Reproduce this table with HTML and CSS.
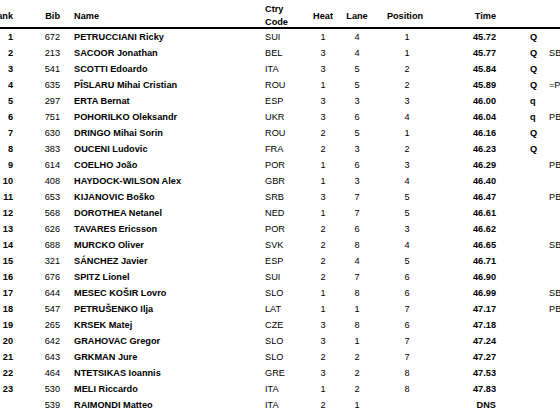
FILE: index.html
```html
<!DOCTYPE html>
<html lang="en">
<head>
<meta charset="utf-8">
<title>Results</title>
<link rel="stylesheet" href="styles.css">
</head>
<body>
<div class="results">
  <div class="row head">
    <div class="c rank">Rank</div>
    <div class="c bib">Bib</div>
    <div class="c name">Name</div>
    <div class="c ctry">Ctry<br>Code</div>
    <div class="c heat">Heat</div>
    <div class="c lane">Lane</div>
    <div class="c pos">Position</div>
    <div class="c time">Time</div>
    <div class="c q"></div>
    <div class="c rem"></div>
  </div>
  <div class="row"><div class="c rank">1</div><div class="c bib">672</div><div class="c name">PETRUCCIANI Ricky</div><div class="c ctry">SUI</div><div class="c heat">1</div><div class="c lane">4</div><div class="c pos">1</div><div class="c time">45.72</div><div class="c q">Q</div><div class="c rem"></div></div>
  <div class="row"><div class="c rank">2</div><div class="c bib">213</div><div class="c name">SACOOR Jonathan</div><div class="c ctry">BEL</div><div class="c heat">3</div><div class="c lane">4</div><div class="c pos">1</div><div class="c time">45.77</div><div class="c q">Q</div><div class="c rem">SB</div></div>
  <div class="row"><div class="c rank">3</div><div class="c bib">541</div><div class="c name">SCOTTI Edoardo</div><div class="c ctry">ITA</div><div class="c heat">3</div><div class="c lane">5</div><div class="c pos">2</div><div class="c time">45.84</div><div class="c q">Q</div><div class="c rem"></div></div>
  <div class="row"><div class="c rank">4</div><div class="c bib">635</div><div class="c name">PÎSLARU Mihai Cristian</div><div class="c ctry">ROU</div><div class="c heat">1</div><div class="c lane">5</div><div class="c pos">2</div><div class="c time">45.89</div><div class="c q">Q</div><div class="c rem">=PB</div></div>
  <div class="row"><div class="c rank">5</div><div class="c bib">297</div><div class="c name">ERTA Bernat</div><div class="c ctry">ESP</div><div class="c heat">3</div><div class="c lane">3</div><div class="c pos">3</div><div class="c time">46.00</div><div class="c q">q</div><div class="c rem"></div></div>
  <div class="row"><div class="c rank">6</div><div class="c bib">751</div><div class="c name">POHORILKO Oleksandr</div><div class="c ctry">UKR</div><div class="c heat">3</div><div class="c lane">6</div><div class="c pos">4</div><div class="c time">46.04</div><div class="c q">q</div><div class="c rem">PB</div></div>
  <div class="row"><div class="c rank">7</div><div class="c bib">630</div><div class="c name">DRINGO Mihai Sorin</div><div class="c ctry">ROU</div><div class="c heat">2</div><div class="c lane">5</div><div class="c pos">1</div><div class="c time">46.16</div><div class="c q">Q</div><div class="c rem"></div></div>
  <div class="row"><div class="c rank">8</div><div class="c bib">383</div><div class="c name">OUCENI Ludovic</div><div class="c ctry">FRA</div><div class="c heat">2</div><div class="c lane">3</div><div class="c pos">2</div><div class="c time">46.23</div><div class="c q">Q</div><div class="c rem"></div></div>
  <div class="row"><div class="c rank">9</div><div class="c bib">614</div><div class="c name">COELHO João</div><div class="c ctry">POR</div><div class="c heat">1</div><div class="c lane">6</div><div class="c pos">3</div><div class="c time">46.29</div><div class="c q"></div><div class="c rem">PB</div></div>
  <div class="row"><div class="c rank">10</div><div class="c bib">408</div><div class="c name">HAYDOCK-WILSON Alex</div><div class="c ctry">GBR</div><div class="c heat">1</div><div class="c lane">3</div><div class="c pos">4</div><div class="c time">46.40</div><div class="c q"></div><div class="c rem"></div></div>
  <div class="row"><div class="c rank">11</div><div class="c bib">653</div><div class="c name">KIJANOVIC Boško</div><div class="c ctry">SRB</div><div class="c heat">3</div><div class="c lane">7</div><div class="c pos">5</div><div class="c time">46.47</div><div class="c q"></div><div class="c rem">PB</div></div>
  <div class="row"><div class="c rank">12</div><div class="c bib">568</div><div class="c name">DOROTHEA Netanel</div><div class="c ctry">NED</div><div class="c heat">1</div><div class="c lane">7</div><div class="c pos">5</div><div class="c time">46.61</div><div class="c q"></div><div class="c rem"></div></div>
  <div class="row"><div class="c rank">13</div><div class="c bib">626</div><div class="c name">TAVARES Ericsson</div><div class="c ctry">POR</div><div class="c heat">2</div><div class="c lane">6</div><div class="c pos">3</div><div class="c time">46.62</div><div class="c q"></div><div class="c rem"></div></div>
  <div class="row"><div class="c rank">14</div><div class="c bib">688</div><div class="c name">MURCKO Oliver</div><div class="c ctry">SVK</div><div class="c heat">2</div><div class="c lane">8</div><div class="c pos">4</div><div class="c time">46.65</div><div class="c q"></div><div class="c rem">SB</div></div>
  <div class="row"><div class="c rank">15</div><div class="c bib">321</div><div class="c name">SÁNCHEZ Javier</div><div class="c ctry">ESP</div><div class="c heat">2</div><div class="c lane">4</div><div class="c pos">5</div><div class="c time">46.71</div><div class="c q"></div><div class="c rem"></div></div>
  <div class="row"><div class="c rank">16</div><div class="c bib">676</div><div class="c name">SPITZ Lionel</div><div class="c ctry">SUI</div><div class="c heat">2</div><div class="c lane">7</div><div class="c pos">6</div><div class="c time">46.90</div><div class="c q"></div><div class="c rem"></div></div>
  <div class="row"><div class="c rank">17</div><div class="c bib">644</div><div class="c name">MESEC KOŠIR Lovro</div><div class="c ctry">SLO</div><div class="c heat">1</div><div class="c lane">8</div><div class="c pos">6</div><div class="c time">46.99</div><div class="c q"></div><div class="c rem">SB</div></div>
  <div class="row"><div class="c rank">18</div><div class="c bib">547</div><div class="c name">PETRUŠENKO Ilja</div><div class="c ctry">LAT</div><div class="c heat">1</div><div class="c lane">1</div><div class="c pos">7</div><div class="c time">47.17</div><div class="c q"></div><div class="c rem">PB</div></div>
  <div class="row"><div class="c rank">19</div><div class="c bib">265</div><div class="c name">KRSEK Matej</div><div class="c ctry">CZE</div><div class="c heat">3</div><div class="c lane">8</div><div class="c pos">6</div><div class="c time">47.18</div><div class="c q"></div><div class="c rem"></div></div>
  <div class="row"><div class="c rank">20</div><div class="c bib">642</div><div class="c name">GRAHOVAC Gregor</div><div class="c ctry">SLO</div><div class="c heat">3</div><div class="c lane">1</div><div class="c pos">7</div><div class="c time">47.24</div><div class="c q"></div><div class="c rem"></div></div>
  <div class="row"><div class="c rank">21</div><div class="c bib">643</div><div class="c name">GRKMAN Jure</div><div class="c ctry">SLO</div><div class="c heat">2</div><div class="c lane">2</div><div class="c pos">7</div><div class="c time">47.27</div><div class="c q"></div><div class="c rem"></div></div>
  <div class="row"><div class="c rank">22</div><div class="c bib">464</div><div class="c name">NTETSIKAS Ioannis</div><div class="c ctry">GRE</div><div class="c heat">3</div><div class="c lane">2</div><div class="c pos">8</div><div class="c time">47.53</div><div class="c q"></div><div class="c rem"></div></div>
  <div class="row"><div class="c rank">23</div><div class="c bib">530</div><div class="c name">MELI Riccardo</div><div class="c ctry">ITA</div><div class="c heat">1</div><div class="c lane">2</div><div class="c pos">8</div><div class="c time">47.83</div><div class="c q"></div><div class="c rem"></div></div>
  <div class="row"><div class="c rank"></div><div class="c bib">539</div><div class="c name">RAIMONDI Matteo</div><div class="c ctry">ITA</div><div class="c heat">2</div><div class="c lane">1</div><div class="c pos"></div><div class="c time">DNS</div><div class="c q"></div><div class="c rem"></div></div>
</div>
</body>
</html>
```

FILE: styles.css
```css
html, body {
  margin: 0;
  padding: 0;
  overflow: hidden;
  background: #ffffff;
}

body {
  width: 560px;
  height: 413px;
  font-family: "Liberation Sans", Arial, sans-serif;
  font-size: 9.2px;
  color: #000000;
}

.results {
  margin-left: -20px;
  width: 640px;
}

.row {
  display: grid;
  grid-template-columns: 33px 47px 205px 40px 36px 32px 64px 59px 53px 60px;
  height: 16px;
  align-items: center;
  line-height: 16px;
  white-space: nowrap;
}

.row.head {
  box-sizing: border-box;
  height: 29px;
  padding-top: 3px;
  line-height: 13px;
  border-bottom: 2px solid #000000;
  font-weight: bold;
}

.rank { text-align: right; font-weight: bold; }
.bib { text-align: right; }
.name { padding-left: 14px; font-weight: bold; }
.ctry { text-align: left; }
.heat { text-align: center; }
.lane { text-align: center; }
.pos { text-align: center; padding-left: 4px; }
.head .pos { padding-left: 0; }
.time { text-align: right; font-weight: bold; }
.q { padding-left: 34px; font-weight: bold; }
.rem { text-align: left; }
```
